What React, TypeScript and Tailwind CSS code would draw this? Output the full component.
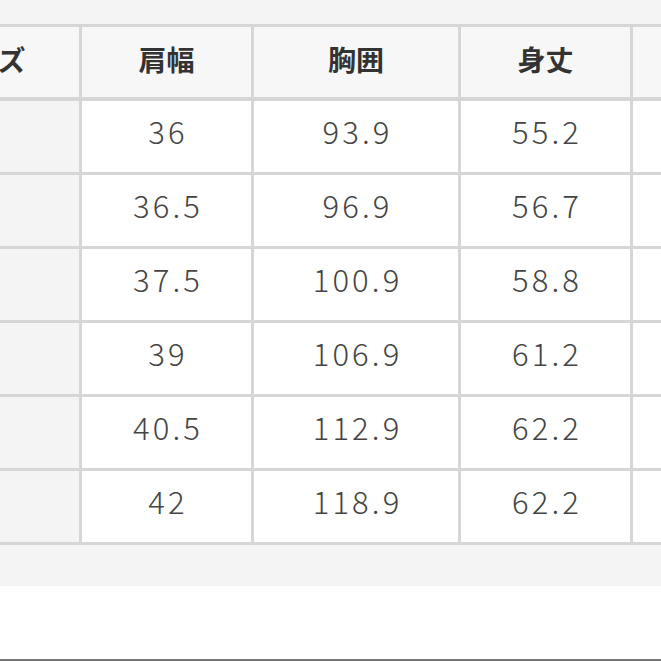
const headers = ["サイズ", "肩幅", "胸囲", "身丈", "袖丈"];

const rows = [
  ["36", "93.9", "55.2"],
  ["36.5", "96.9", "56.7"],
  ["37.5", "100.9", "58.8"],
  ["39", "106.9", "61.2"],
  ["40.5", "112.9", "62.2"],
  ["42", "118.9", "62.2"],
];

export default function App() {
  return (
    <div className="w-[661px] h-[661px] overflow-hidden bg-white flex flex-col">
      <div className="bg-[#f4f4f4] pt-[24px] pb-[41px] overflow-hidden">
        <div className="ml-[-114px] w-max grid grid-cols-[190px_169px_204px_169px_169px] auto-rows-[71px] gap-[3px] border-[3px] border-[#d6d6d6] bg-[#d6d6d6]">
          {headers.map((h) => (
            <div
              key={h}
              className="h-[70px] pb-[7px] bg-[#f7f7f7] flex items-center justify-center text-[28px] font-bold text-[#333] [font-family:'Noto_Sans_CJK_JP',sans-serif]"
            >
              {h}
            </div>
          ))}
          {rows.map((r, i) => (
            <div key={i} className="contents">
              <div className="bg-[#f4f4f4]" />
              {r.map((v, j) => (
                <div
                  key={j}
                  className="bg-white pb-[10px] pl-[0.1em] flex items-center justify-center text-[31px] font-light tracking-[0.1em] text-[#444] [font-family:'Noto_Sans_CJK_JP',sans-serif]"
                >
                  {v}
                </div>
              ))}
              <div className="bg-white" />
            </div>
          ))}
        </div>
      </div>
      <div className="flex-1" />
      <div className="h-[2px] bg-[#777]" />
    </div>
  );
}
